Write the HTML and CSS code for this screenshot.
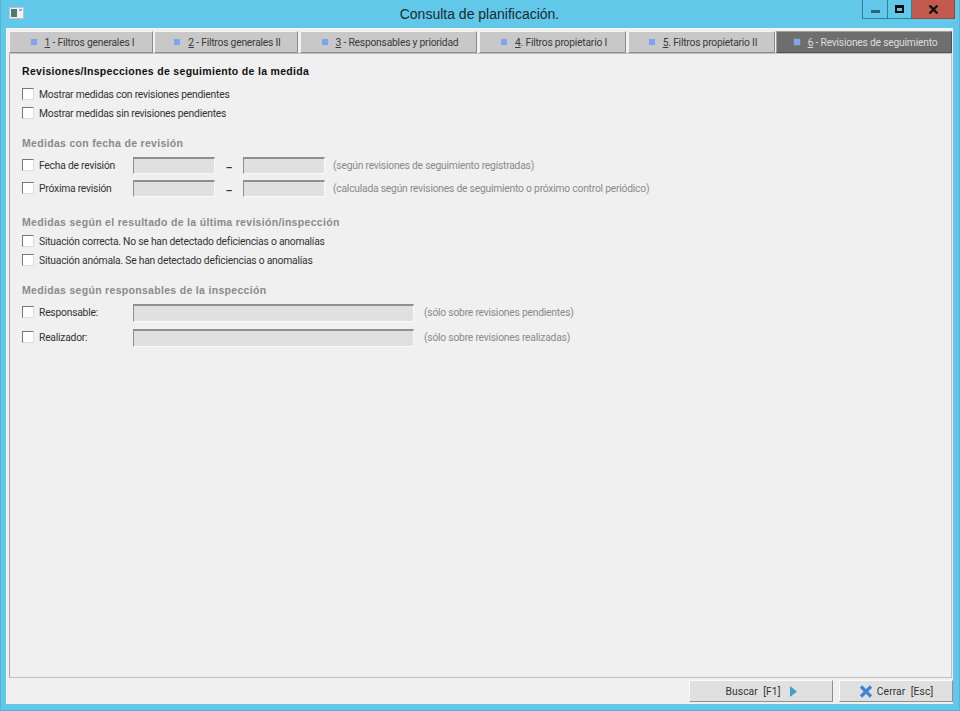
FILE: index.html
```html
<!DOCTYPE html>
<html lang="es">
<head>
<meta charset="utf-8">
<title>Consulta de planificación.</title>
<link rel="stylesheet" href="styles.css">
</head>
<body>
<div class="window">
  <header class="titlebar">
    <svg class="app-icon" width="15" height="12" viewBox="0 0 15 12"><rect x="0.5" y="0.5" width="14" height="11" fill="#f2f2f2" stroke="#b8c4c8"/><rect x="2" y="2" width="6" height="8" fill="#4d7a72"/><rect x="10" y="2" width="3" height="2" fill="#8fb4d8"/></svg>
    <div class="title">Consulta de planificación.</div>
    <div class="controls">
      <div class="ctl ctl-min"><span class="min-glyph"></span></div>
      <div class="ctl ctl-max"><span class="max-glyph"></span></div>
      <div class="ctl ctl-close"><svg width="11" height="9" viewBox="0 0 11 9"><path d="M1.5 0.5 L9.5 8.5 M9.5 0.5 L1.5 8.5" stroke="#111" stroke-width="2.4" fill="none"/></svg></div>
    </div>
  </header>
  <div class="client">
    <nav class="tabs">
      <div class="tab t1"><span class="sq"></span><span><u>1</u> - Filtros generales I</span></div>
      <div class="tab t2"><span class="sq"></span><span><u>2</u> - Filtros generales II</span></div>
      <div class="tab t3"><span class="sq"></span><span><u>3</u> - Responsables y prioridad</span></div>
      <div class="tab t4"><span class="sq"></span><span><u>4</u>. Filtros propietario I</span></div>
      <div class="tab t5"><span class="sq"></span><span><u>5</u>. Filtros propietario II</span></div>
      <div class="tab t6 active"><span class="sq"></span><span><u>6</u> - Revisiones de seguimiento</span></div>
    </nav>
    <main class="panel">
      <h2 class="heading dark h-first">Revisiones/Inspecciones de seguimiento de la medida</h2>
      <div class="row r19"><span class="cb"></span><span class="lbl">Mostrar medidas con revisiones pendientes</span></div>
      <div class="row r19"><span class="cb"></span><span class="lbl">Mostrar medidas sin revisiones pendientes</span></div>

      <h2 class="heading h-a">Medidas con fecha de revisión</h2>
      <div class="row r23"><span class="cb"></span><span class="lbl fixed">Fecha de revisión</span><span class="inp short"></span><span class="dash">–</span><span class="inp short"></span><span class="note n-short">(según revisiones de seguimiento registradas)</span></div>
      <div class="row r23"><span class="cb"></span><span class="lbl fixed">Próxima revisión</span><span class="inp short"></span><span class="dash">–</span><span class="inp short"></span><span class="note n-short">(calculada según revisiones de seguimiento o próximo control periódico)</span></div>

      <h2 class="heading h-b">Medidas según el resultado de la última revisión/inspección</h2>
      <div class="row r19"><span class="cb"></span><span class="lbl">Situación correcta. No se han detectado deficiencias o anomalías</span></div>
      <div class="row r19"><span class="cb"></span><span class="lbl">Situación anómala. Se han detectado deficiencias o anomalías</span></div>

      <h2 class="heading h-c">Medidas según responsables de la inspección</h2>
      <div class="row r25"><span class="cb"></span><span class="lbl fixed">Responsable:</span><span class="inp long"></span><span class="note n-long">(sólo sobre revisiones pendientes)</span></div>
      <div class="row r25"><span class="cb"></span><span class="lbl fixed">Realizador:</span><span class="inp long"></span><span class="note n-long">(sólo sobre revisiones realizadas)</span></div>
    </main>
    <footer class="footer">
      <div class="btn b-search"><span>Buscar&nbsp;&nbsp;[F1]</span><svg width="7" height="11" viewBox="0 0 7 11"><path d="M0 0 L7 5.5 L0 11 Z" fill="#3f9fcf"/></svg></div>
      <div class="btn b-close"><svg width="14" height="13" viewBox="0 0 14 13"><path d="M2 1.5 L12 11.5 M12 1.5 L2 11.5" stroke="#3d86d6" stroke-width="3.2" fill="none"/></svg><span>Cerrar&nbsp;&nbsp;[Esc]</span></div>
    </footer>
  </div>
</div>
</body>
</html>
```
FILE: styles.css
```css
* { box-sizing: border-box; }
html, body { margin: 0; padding: 0; }
body { width: 960px; height: 711px; overflow: hidden; font-family: Roboto, "Liberation Sans", Arial, sans-serif; font-size: 10.3px; letter-spacing: -0.22px; color: #333; }
.window { width: 960px; height: 711px; background: #62c8ea; padding: 0 6px 6px 5px; display: flex; flex-direction: column; border: 1px solid #55b3d4; border-top: 0; }
.titlebar { height: 28px; display: flex; align-items: center; position: relative; flex: none; }
.app-icon { margin-left: 3px; margin-top: -2px; }
.title { position: absolute; left: 0; right: 0; top: 6px; text-align: center; font-family: "Liberation Sans", Arial, sans-serif; font-size: 14px; line-height: 16px; letter-spacing: 0; color: #1c2a30; }
.controls { position: absolute; right: -2px; top: 0; display: flex; height: 19px; }
.ctl { height: 19px; display: flex; align-items: center; justify-content: center; border: 1px solid #2f7f98; border-top: 0; background: #62c8ea; }
.ctl-min { width: 26px; }
.ctl-max { width: 24px; border-left: 0; }
.ctl-close { width: 43px; background: #c25a50; border: 1px solid #8a4a44; border-top: 0; border-left: 0; }
.min-glyph { width: 9px; height: 3px; background: #2d6478; margin-top: 5px; }
.max-glyph { width: 9px; height: 8px; border: 2px solid #0a0a0a; border-top-width: 3px; }
.client { flex: 1; background: #f0f0f0; border-top: 1px solid #f6f6f6; border-left: 1px solid #fff; display: flex; flex-direction: column; min-height: 0; }
.tabs { display: flex; height: 24px; padding: 2px 0 0 2px; flex: none; }
.tab { height: 22px; background: #c8c8c8; border: 1px solid #f4f4f4; border-right-color: #8c8c8c; border-bottom-color: #8c8c8c; display: flex; align-items: center; justify-content: center; gap: 8px; color: #3a3a3a; padding-left: 3px; }
.t1 { width: 144px; margin-right: 1px; }
.t2 { width: 144px; margin-right: 2px; }
.t3 { width: 177px; margin-right: 2px; }
.t4 { width: 147px; margin-right: 2px; }
.t5 { width: 147px; margin-right: 1px; }
.t6 { width: 176px; }
.tab.active { background: #6e6e6e; color: #dcdcdc; border-color: #a0a0a0; border-right-color: #505050; border-bottom-color: #505050; }
.sq { width: 6px; height: 6px; background: #7fa6ea; flex: none; box-shadow: 0 0 1px #a8c4f2; }
.panel { flex: 1; margin: 0 0 0 2px; width: 943px; border: 1px solid #c0c0c0; border-left-color: #a8a8a8; padding: 10px 0 0 12px; min-height: 0; }
.heading { margin: 0; font-family: "Liberation Sans", Arial, sans-serif; font-size: 10.5px; line-height: 14px; font-weight: bold; color: #8a8a8a; letter-spacing: 0.31px; }
.heading.dark { color: #111; }
.h-first { margin-bottom: 7px; }
.h-a { margin-top: 13px; margin-bottom: 4px; }
.h-b { margin-top: 15px; margin-bottom: 3px; }
.h-c { margin-top: 13px; margin-bottom: 3px; }
.row { display: flex; align-items: center; }
.r19 { height: 19px; }
.r23 { height: 23px; }
.r25 { height: 25px; }
.cb { width: 12px; height: 12px; background: #fff; border: 1px solid #777; border-right-color: #ddd; border-bottom-color: #ddd; flex: none; margin-right: 5px; margin-top: -1px; }
.lbl { color: #333; white-space: nowrap; }
.fixed { width: 94px; }
.inp { background: #e0e0e0; border: 1px solid #fafafa; border-top: 2px solid #8f8f8f; border-left: 1px solid #8f8f8f; flex: none; }
.short { width: 82px; height: 17px; }
.long { width: 281px; height: 18px; }
.dash { width: 28px; text-align: center; flex: none; color: #333; padding-top: 4px; font-weight: bold; }
.note { color: #8a8a8a; white-space: nowrap; }
.n-short { margin-left: 8px; }
.n-long { margin-left: 10px; }
.footer { height: 26px; display: flex; justify-content: flex-end; align-items: flex-start; padding: 2px 0 0; flex: none; }
.btn { height: 22px; background: #e0e0e0; border: 1px solid #fafafa; border-right-color: #8f8f8f; border-bottom-color: #8f8f8f; display: flex; align-items: center; justify-content: center; color: #333; letter-spacing: 0.1px; }
.b-search { width: 144px; margin-right: 6px; gap: 9px; }
.b-close { width: 114px; gap: 4px; }
```
